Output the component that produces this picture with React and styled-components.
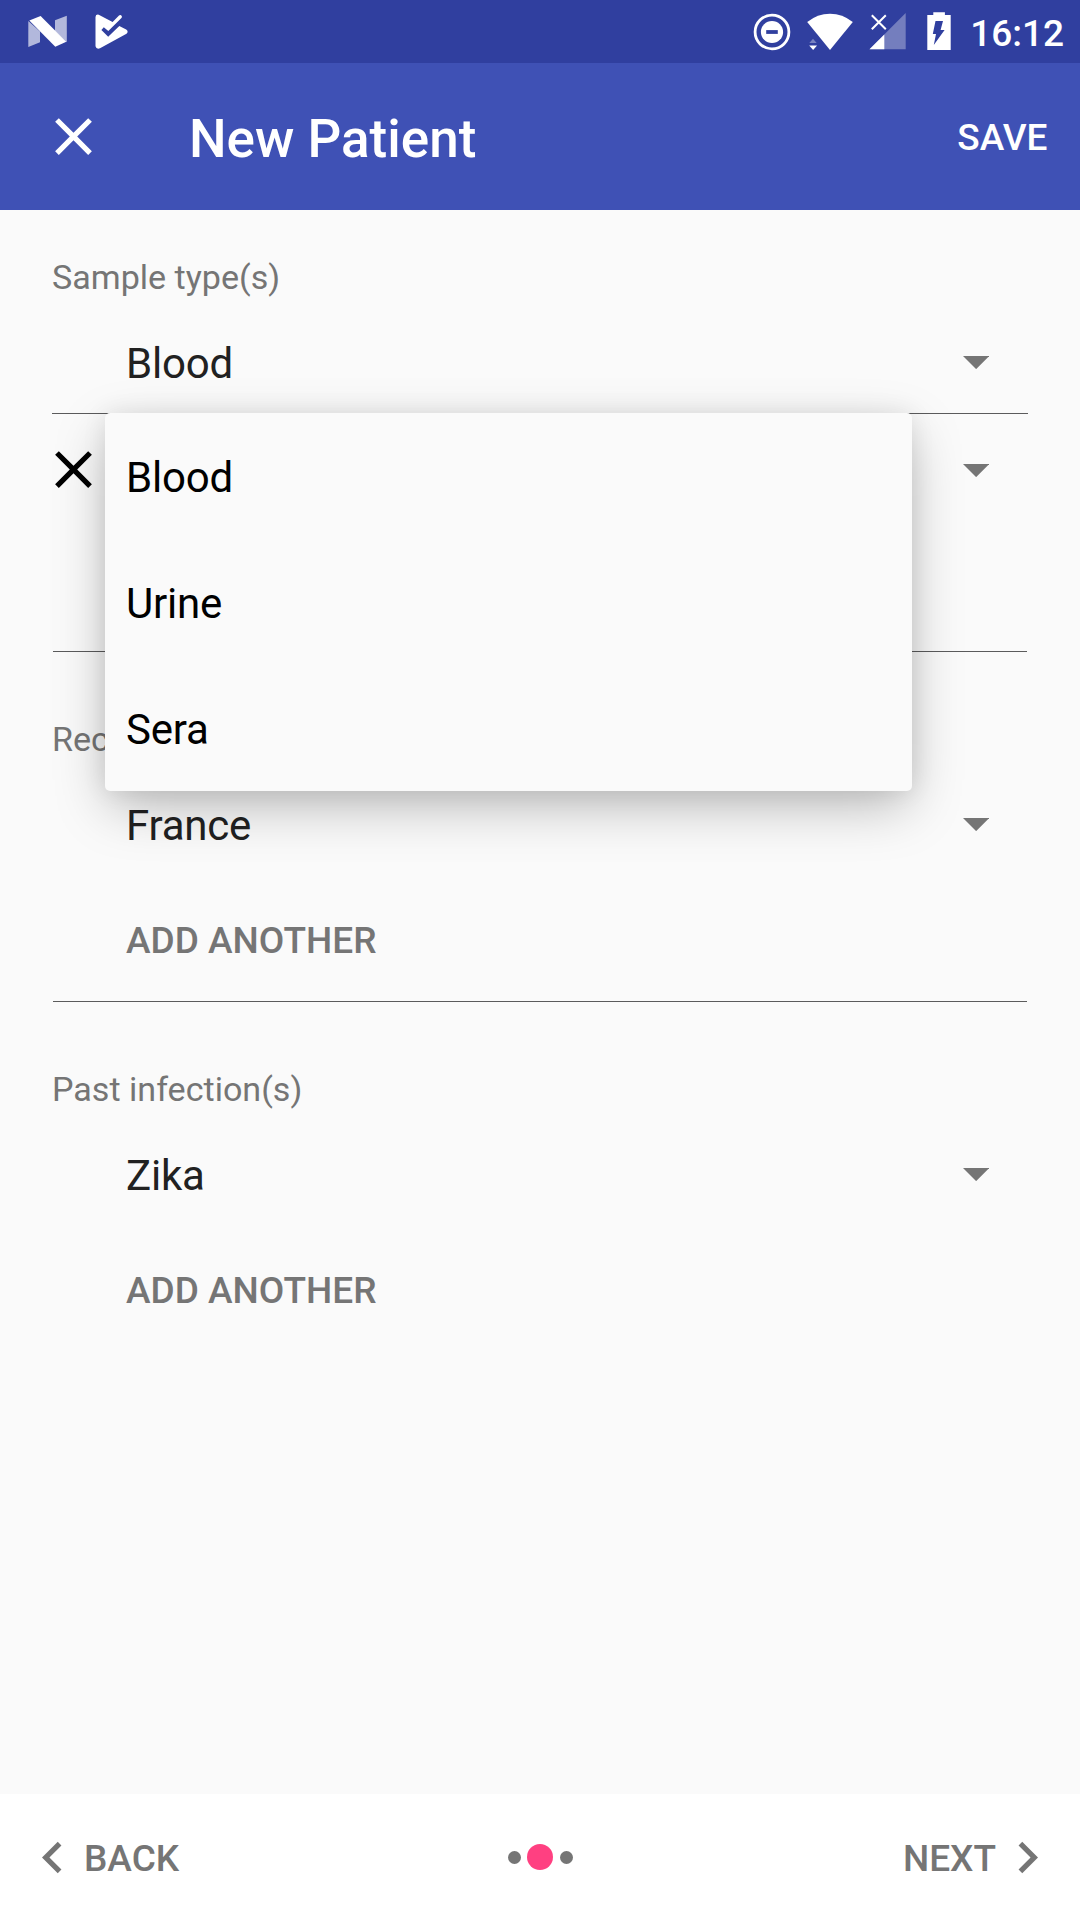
import React from "react";
import styled, { createGlobalStyle } from "styled-components";

const GlobalStyle = createGlobalStyle`
  * { box-sizing: border-box; }
  body {
    margin: 0;
    background: #fafafa;
    font-family: Roboto, "Noto Sans", sans-serif;
  }
  button { font-family: inherit; border: 0; background: none; padding: 0; margin: 0; }
  svg { display: block; flex: none; }
`;

const Screen = styled.div`
  display: flex;
  flex-direction: column;
  width: 1080px;
  height: 1920px;
  overflow: hidden;
  background: #fafafa;
`;

const StatusBar = styled.header`
  display: flex;
  align-items: center;
  flex: none;
  height: 63px;
  padding: 0 16px 0 28px;
  background: #303f9f;
`;

const StatusGroup = styled.div`
  display: flex;
  align-items: center;
  gap: 16px;
`;

const Clock = styled.span`
  padding: 4px 0 0 3px;
  color: #fff;
  font-size: 37px;
  font-weight: 500;
  line-height: 44px;
`;

const Notifications = styled.div`
  display: flex;
  gap: 28px;
  margin-right: auto;
`;

const Toolbar = styled.div`
  display: flex;
  align-items: center;
  flex: none;
  height: 147px;
  padding: 0 32.5px 0 42px;
  background: #3f51b5;
  color: #fff;
`;

const Title = styled.h1`
  flex: 1;
  margin: 0;
  padding: 4px 0 0 84px;
  font-size: 53px;
  font-weight: 500;
  line-height: 62px;
`;

const TextButton = styled.button`
  color: ${(p) => p.$color || "#757575"};
  font-size: 37px;
  font-weight: 500;
  line-height: 44px;
  text-transform: uppercase;
  padding-top: ${(p) => p.$drop || 2}px;
`;

const Form = styled.main`
  flex: 1;
  padding: 47px 52px 0;
`;

const Section = styled.section`
  padding-top: ${(p) => (p.$first ? 0 : 67)}px;
`;

const Label = styled.div`
  margin-bottom: 17px;
  color: #757575;
  font-size: 34.1px;
  line-height: 40px;
`;

const Divider = styled.hr`
  height: 1px;
  margin: 0 ${(p) => p.$inset || 0}px;
  border: 0;
  background: #5b5b5c;
`;

const SpinnerRow = styled.div`
  position: relative;
  display: flex;
  align-items: center;
  height: ${(p) => (p.$extra ? 111 : 99)}px;
  padding-top: ${(p) => (p.$extra ? 4 : 0)}px;
  margin-left: -10px;
`;

const RowAction = styled.div`
  width: 84px;
  flex: none;
  padding-bottom: 4px;
`;

const SpinnerValue = styled.span`
  flex: 1;
  color: #212121;
  font-size: 42px;
  letter-spacing: -0.2px;
  line-height: 50px;
`;

const Caret = styled.span`
  margin: 0 39px 2px 0;
`;

const AddRow = styled.div`
  display: flex;
  align-items: center;
  height: 126px;
  padding: 3px 0 0 74px;
`;

const Menu = styled.ul`
  position: absolute;
  z-index: 2;
  top: -1px;
  left: 63px;
  width: 807px;
  margin: 0;
  padding: 0;
  list-style: none;
  border-radius: 5px;
  background: #fafafa;
  box-shadow: 0 0 24px rgba(0, 0, 0, 0.08), 0 18px 54px -4px rgba(0, 0, 0, 0.27);
`;

const MenuItem = styled.li`
  display: flex;
  align-items: center;
  height: 126px;
  padding: 4px 21px 0;
  color: #000;
  font-size: 42px;
  letter-spacing: -0.2px;
  line-height: 50px;
`;

const Footer = styled.footer`
  display: grid;
  grid-template-columns: 1fr auto 1fr;
  align-items: center;
  flex: none;
  height: 126px;
  padding: 0 21px;
  background: #fff;
`;

const NavItem = styled.div`
  display: flex;
  align-items: center;
  justify-self: ${(p) => p.$side};
`;

const Dots = styled.div`
  display: flex;
  align-items: center;
  gap: 6.5px;
`;

const Dot = styled.span`
  width: ${(p) => (p.$active ? 26 : 13)}px;
  height: ${(p) => (p.$active ? 26 : 13)}px;
  border-radius: 50%;
  background: ${(p) => (p.$active ? "#ff4081" : "#757575")};
`;

function MaterialIcon({ d, color }) {
  return (
    <svg width="63" height="63" viewBox="0 0 24 24" fill={color}>
      <path d={d} />
    </svg>
  );
}

const CLOSE =
  "M19 6.41L17.59 5 12 10.59 6.41 5 5 6.41 10.59 12 5 17.59 6.41 19 12 13.41 17.59 19 19 17.59 13.41 12z";
const LEFT = "M15.41 7.41L14 6l-6 6 6 6 1.41-1.41L10.83 12z";
const RIGHT = "M10 6L8.59 7.41 13.17 12l-4.58 4.59L10 18l6-6z";

const NougatIcon = () => (
  <svg width="39" height="63" viewBox="28 0 39 63" fill="#fff">
    <path d="M28.3 21L40 31.5V42.3L28.3 46.9z" opacity=".63" />
    <path d="M55 20.2L66.8 15.8V42.2L55 31z" opacity=".63" />
    <path d="M29.3 20.6L40.6 16 66.3 41.8 55.3 46.8z" />
  </svg>
);

const PlayCheckIcon = () => (
  <svg width="33" height="63" viewBox="95 0 33 63" fill="#fff">
    <path d="M95.5 17Q95.7 14.2 98.7 14.7L112.6 22 119 15.4Q120.6 14.3 121.9 16.2L121.7 17.7 108.3 31 103.8 27.2 101.4 30 108.2 36.8 119.3 26 126.2 29.6Q128.9 31.7 126.5 33.8L100 48.3Q96.3 49.6 95.5 46.2z" />
  </svg>
);

const DoNotDisturbIcon = () => (
  <svg width="38" height="63" viewBox="753 0 38 63">
    <circle cx="772" cy="32" r="16.9" fill="none" stroke="#fff" strokeWidth="2.8" />
    <circle cx="772" cy="32" r="11.1" fill="#fff" />
    <path d="M766.2 30.1h11.6v3.8h-11.6z" fill="#303f9f" />
  </svg>
);

const WifiIcon = () => (
  <svg width="46" height="63" viewBox="807.5 0 46 63" fill="#fff">
    <path d="M807.7 22Q818 13.7 830.5 13.7T853.3 22L830.5 50z" />
    <path d="M809.8 43L813.5 38.7 817.2 43z" opacity=".35" />
    <path d="M809.7 45.6H817.6L813.6 50z" />
  </svg>
);

const SignalIcon = () => (
  <svg width="37" height="63" viewBox="868.5 0 37 63">
    <path d="M869 49.3L905.2 13V49.3z" fill="#fff" opacity=".33" />
    <path d="M869 49.3L883.8 34.5V49.3z" fill="#fff" />
    <path d="M871.3 15.2L885.3 29.2M885.3 15.2L871.3 29.2" stroke="#fff" strokeWidth="2" />
  </svg>
);

const BatteryIcon = () => (
  <svg width="29" height="63" viewBox="922 0 29 63">
    <path d="M933.3 12.3h11.6v2.8h5.8V50H927.3V15.1h6z" fill="#fff" />
    <path d="M935.5 21h7.5l-2.4 9h4L933.8 45l2.2-11h-3.2z" fill="#303f9f" />
  </svg>
);

const CaretIcon = () => (
  <svg width="26.25" height="13.125" viewBox="0 0 10 5" fill="#757575">
    <path d="M0 0l5 5 5-5z" />
  </svg>
);

function Spinner({ value, removable, options }) {
  return (
    <SpinnerRow $extra={removable}>
      <RowAction>{removable && <MaterialIcon d={CLOSE} color="#000" />}</RowAction>
      <SpinnerValue>{value}</SpinnerValue>
      <Caret>
        <CaretIcon />
      </Caret>
      {options && (
        <Menu>
          {options.map((option) => (
            <MenuItem key={option}>{option}</MenuItem>
          ))}
        </Menu>
      )}
    </SpinnerRow>
  );
}

const AddAnother = () => (
  <AddRow>
    <TextButton>Add another</TextButton>
  </AddRow>
);

export default function App() {
  return (
    <Screen>
      <GlobalStyle />
      <StatusBar>
        <Notifications>
          <NougatIcon />
          <PlayCheckIcon />
        </Notifications>
        <StatusGroup>
          <DoNotDisturbIcon />
          <WifiIcon />
          <SignalIcon />
          <BatteryIcon />
          <Clock>16:12</Clock>
        </StatusGroup>
      </StatusBar>

      <Toolbar>
        <MaterialIcon d={CLOSE} color="#fff" />
        <Title>New Patient</Title>
        <TextButton $color="#fff">Save</TextButton>
      </Toolbar>

      <Form>
        <Section $first>
          <Label>Sample type(s)</Label>
          <Spinner value="Blood" />
          <Divider />
          <Spinner removable options={["Blood", "Urine", "Sera"]} />
          <AddRow />
          <Divider $inset={1} />
        </Section>

        <Section>
          <Label>Rec</Label>
          <Spinner value="France" />
          <AddAnother />
          <Divider $inset={1} />
        </Section>

        <Section>
          <Label>Past infection(s)</Label>
          <Spinner value="Zika" />
          <AddAnother />
        </Section>
      </Form>

      <Footer>
        <NavItem $side="start">
          <MaterialIcon d={LEFT} color="#757575" />
          <TextButton $drop={4}>Back</TextButton>
        </NavItem>
        <Dots>
          <Dot />
          <Dot $active />
          <Dot />
        </Dots>
        <NavItem $side="end">
          <TextButton $drop={4}>Next</TextButton>
          <MaterialIcon d={RIGHT} color="#757575" />
        </NavItem>
      </Footer>
    </Screen>
  );
}
